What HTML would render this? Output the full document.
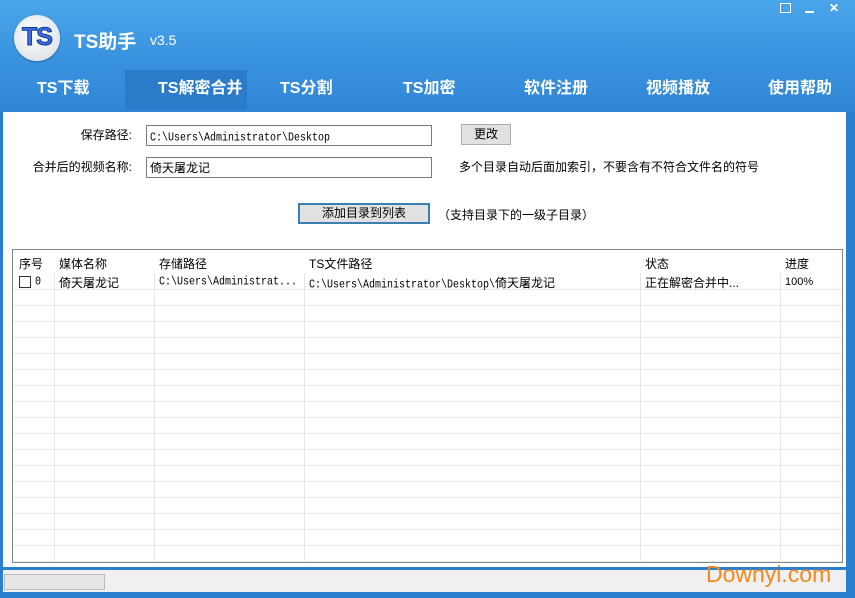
<!DOCTYPE html>
<html><head><meta charset="utf-8"><style>
*{margin:0;padding:0;box-sizing:border-box}
body{width:855px;height:598px;overflow:hidden;position:relative;background:#2a7fcf;font-family:"Liberation Sans","Noto Sans CJK SC",sans-serif;font-size:12px;color:#000}
.hdr{position:absolute;left:0;top:0;width:855px;height:112px;background:linear-gradient(#4aa6ea,#3a93df 50%,#2f86d6)}
.logo{position:absolute;left:14px;top:15px;width:46px;height:46px;border-radius:50%;background:radial-gradient(circle at 45% 40%,#fff,#d6dbe2);box-shadow:0 1px 2px rgba(0,0,0,.3)}
.logo span{position:absolute;left:0;width:46px;top:8px;text-align:center;font:bold 25px "Liberation Sans",sans-serif;color:#3a6ee8;-webkit-text-stroke:1px #123a8a;letter-spacing:-1px}
.title{position:absolute;left:74px;top:27px;color:#fff;font-weight:bold;font-size:19px}
.ver{position:absolute;left:150px;top:32px;color:#fff;font-size:14px}
.nav{position:absolute;top:70px;height:40px;line-height:38px;color:#fff;font-weight:bold;font-size:16px}
.act{position:absolute;left:125px;top:70px;width:122px;height:40px;background:#2b7cc8}
.ctl{position:absolute;top:4px;color:#fff;font-weight:bold;font-size:12px}
.main{position:absolute;left:3px;top:112px;width:843px;height:455px;background:#fff}
.lbl{position:absolute;font-size:12px;text-align:right}
.inp{position:absolute;height:21px;border:1px solid #7a7a7a;background:#fff;padding:3px 0 0 3px;font-size:12px}
.th,.td{position:absolute;font-size:12px;white-space:nowrap}
.mono,.td.mono{font-family:"Liberation Mono",monospace;font-size:10px;display:inline-block;transform:scaleY(1.2);transform-origin:0 50%}
.btn{position:absolute;border:1px solid #adadad;background:#e1e1e1;text-align:center;font-size:12px}
.tbl{position:absolute;left:12px;top:249px;width:831px;height:314px;border:1px solid #828790;background:#fff;overflow:hidden}
.rows{position:absolute;left:0;top:40px;width:100%;height:280px;background:repeating-linear-gradient(#fff 0 15px,#eaeaea 15px 16px)}
.col{position:absolute;top:0;height:100%;width:1px;background:#e6e6e6}
.status{position:absolute;left:3px;top:570px;width:843px;height:22px;background:#f0f0f0}
.prog{position:absolute;left:4px;top:574px;width:101px;height:16px;border:1px solid #bcbcbc;background:#e6e6e6}
.wm{position:absolute;left:706px;top:561px;color:#f08a20;font-size:23px;font-family:"Liberation Sans",sans-serif}
</style></head><body>
<div class="hdr"></div>
<div class="logo"><span>TS</span></div>
<div class="title">TS助手</div>
<div class="ver">v3.5</div>
<div class="ctl" style="left:780px;top:3px;width:11px;height:10px;border:1px solid #fff"></div>
<div class="ctl" style="left:805px;top:11px;width:9px;height:2px;background:#fff"></div>
<div class="ctl" style="left:829px;top:1px">✕</div>
<div class="act"></div>
<div class="nav" style="left:37px">TS下载</div>
<div class="nav" style="left:158px">TS解密合并</div>
<div class="nav" style="left:280px">TS分割</div>
<div class="nav" style="left:403px">TS加密</div>
<div class="nav" style="left:524px">软件注册</div>
<div class="nav" style="left:646px">视频播放</div>
<div class="nav" style="left:768px">使用帮助</div>
<div class="main"></div>
<div class="lbl" style="left:40px;top:126px;width:92px">保存路径:</div>
<div class="lbl" style="left:10px;top:158px;width:122px">合并后的视频名称:</div>
<div class="inp" style="left:146px;top:125px;width:286px;padding-top:3px"><span class="mono">C:\Users\Administrator\Desktop</span></div>
<div class="inp" style="left:146px;top:157px;width:286px;padding-top:1px">倚天屠龙记</div>
<div class="btn" style="left:461px;top:124px;width:50px;height:21px;line-height:19px">更改</div>
<div class="lbl" style="left:459px;top:158px;text-align:left">多个目录自动后面加索引，不要含有不符合文件名的符号</div>
<div class="btn" style="left:298px;top:203px;width:132px;height:21px;line-height:17px;border:2px solid #3c7fb1">添加目录到列表</div>
<div class="lbl" style="left:438px;top:206px;text-align:left">（支持目录下的一级子目录）</div>
<div class="tbl">
<div class="rows"></div>
<div class="col" style="left:41px"></div><div class="col" style="left:141px"></div><div class="col" style="left:291px"></div><div class="col" style="left:627px"></div><div class="col" style="left:767px"></div>
<div style="position:absolute;left:0;top:0;width:100%;height:23px;background:#fff"></div>
<div style="position:absolute;left:0;top:39px;width:100%;height:1px;background:#eaeaea"></div>
<div class="th" style="left:6px;top:5px">序号</div>
<div class="th" style="left:46px;top:5px">媒体名称</div>
<div class="th" style="left:146px;top:5px">存储路径</div>
<div class="th" style="left:296px;top:5px">TS文件路径</div>
<div class="th" style="left:632px;top:5px">状态</div>
<div class="th" style="left:772px;top:5px">进度</div>
<div style="position:absolute;left:6px;top:26px;width:12px;height:12px;border:1px solid #333;background:#fff"></div>
<div class="td mono" style="left:22px;top:27px">0</div>
<div class="td" style="left:46px;top:24px">倚天屠龙记</div>
<div class="td mono" style="left:146px;top:27px">C:\Users\Administrat...</div>
<div class="td" style="left:296px;top:24px"><span class="mono">C:\Users\Administrator\Desktop\</span>倚天屠龙记</div>
<div class="td" style="left:632px;top:24px">正在解密合并中...</div>
<div class="td" style="left:772px;top:26px;font-size:11px">100%</div>
</div>
<div class="status"></div>
<div class="prog"></div>
<div class="wm">Downyi.com</div>
</body></html>
